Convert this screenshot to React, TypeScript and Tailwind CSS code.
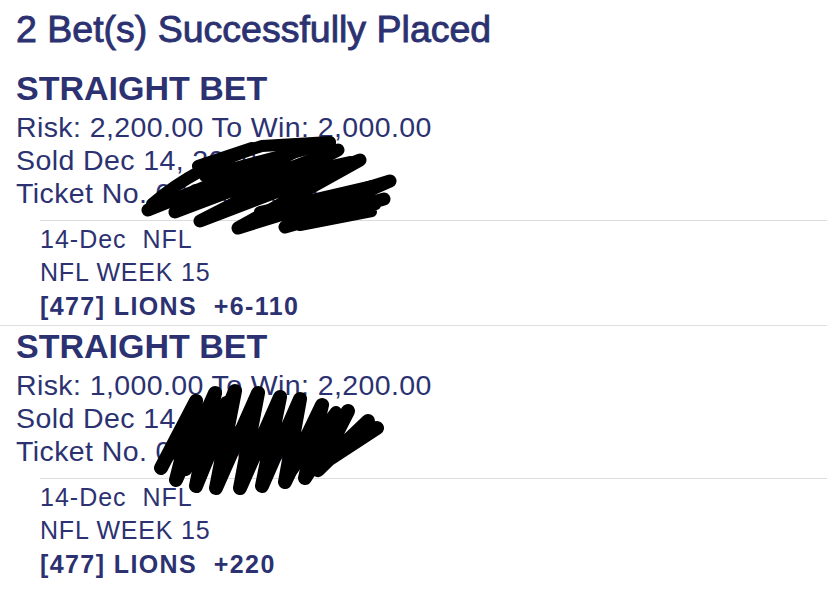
import React from 'react';

interface Leg {
  date: string;
  league: string;
  week: string;
  pick: string;
}

interface Bet {
  type: string;
  risk: string;
  toWin: string;
  sold: string;
  ticket: string;
  legs: Leg[];
}

const bets: Bet[] = [
  {
    type: 'STRAIGHT BET',
    risk: '2,200.00',
    toWin: '2,000.00',
    sold: 'Sold Dec 14, 2019',
    ticket: 'Ticket No. 0000000000',
    legs: [{ date: '14-Dec', league: 'NFL', week: 'NFL WEEK 15', pick: '[477] LIONS\u00a0\u00a0+6-110' }],
  },
  {
    type: 'STRAIGHT BET',
    risk: '1,000.00',
    toWin: '2,200.00',
    sold: 'Sold Dec 14, 2019',
    ticket: 'Ticket No. 0000000000',
    legs: [{ date: '14-Dec', league: 'NFL', week: 'NFL WEEK 15', pick: '[477] LIONS\u00a0\u00a0+220' }],
  },
];

function BetCard({ bet, first }: { bet: Bet; first: boolean }) {
  return (
    <div className={first ? 'pt-0' : 'border-t border-[#dedede]'}>
      {/* Тип опкладе */}
      <div className="pl-[16px] text-[34px] leading-[41px] font-bold">{bet.type}</div>
      <div className="pl-[16px] mt-[2px] text-[28.5px] leading-[33px] tracking-[0.4px]">
        <div className="whitespace-pre">{`Risk: ${bet.risk} To Win: ${bet.toWin}`}</div>
        <div>{bet.sold}</div>
        <div>{bet.ticket}</div>
      </div>
      {/* Детаљи утакмице */}
      <div className="ml-[40px] mt-[10px] border-t border-[#dcdcdc] pt-[2px] pb-[2px] text-[25px]">
        {bet.legs.map((leg, idx) => (
          <div key={idx}>
            <div className="leading-[33px] tracking-[1px]">
              {leg.date}
              {'\u00a0\u00a0'}
              {leg.league}
            </div>
            <div className="leading-[33px] tracking-[0.8px]">{leg.week}</div>
            <div className="leading-[34px] font-bold tracking-[1.4px]">{leg.pick}</div>
          </div>
        ))}
      </div>
    </div>
  );
}

function Scribbles() {
  return (
    <svg
      className="absolute inset-0 pointer-events-none"
      width="827"
      height="606"
      viewBox="0 0 827 606"
      fill="none"
      stroke="#000"
      strokeLinecap="round"
      strokeLinejoin="round"
    >
      {/* прва шкработина: дуге косе петље */}
      <path
        strokeWidth="13"
        d="M148 210 L298 150 L175 212 L338 150 L200 221 L360 160 L238 228 L390 181 L285 227 L384 199"
      />
      <path strokeWidth="12" d="M152 204 C 180 180, 215 160, 262 146 L330 142" />
      <path strokeWidth="12" d="M198 166 L252 148 M205 176 L330 143 M222 190 L350 162 M260 212 L372 186" />
      <path strokeWidth="10" d="M292 214 L376 205 M300 226 L372 212" />
      {/* друга шкработина: усправне петље */}
      <path
        strokeWidth="14"
        d="M161 468 L196 401 L176 480 L215 393 L196 486 L235 391 L216 488 L258 393 L240 488 L280 397 L262 486 L300 399 L285 482 L322 405 L305 478 L348 411 L318 470 L368 421 L325 462 L377 428"
      />
      <path strokeWidth="12" d="M170 455 L205 412 M186 470 L226 402 M292 470 L336 412" />
    </svg>
  );
}

export default function App() {
  return (
    <div className="relative w-full h-[606px] bg-white overflow-hidden text-[#2c3271] font-['Liberation_Sans',Arial,sans-serif]">
      <div className="pl-[16px] pt-[7px] text-[37.5px] leading-[44px] [-webkit-text-stroke:0.9px_#2c3271]">
        2 Bet(s) Successfully Placed
      </div>
      <div className="mt-[16.5px]">
        {bets.map((bet, idx) => (
          <BetCard key={idx} bet={bet} first={idx === 0} />
        ))}
      </div>
      <Scribbles />
    </div>
  );
}
